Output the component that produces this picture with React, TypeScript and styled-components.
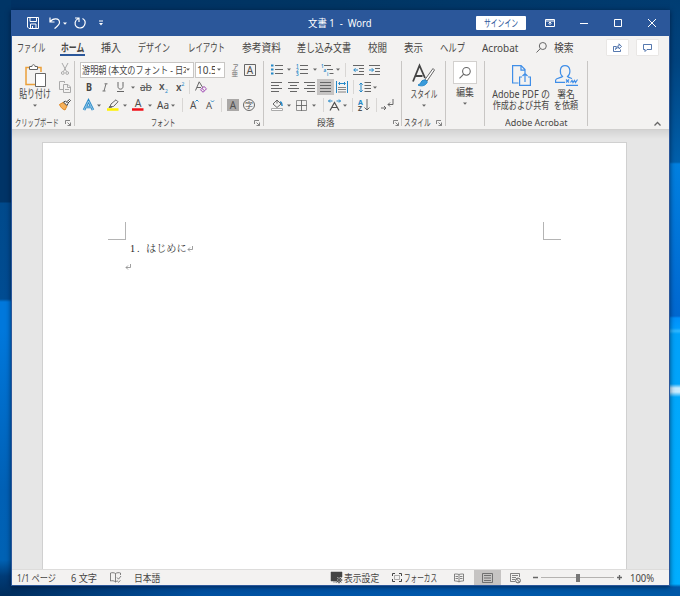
import React from 'react';
import styled, { createGlobalStyle } from 'styled-components';

const BLUE = '#2b579a';
const INK = '#666';
const SKY = '#2488c8';
const UI = '"Noto Sans", "Noto Sans CJK JP", sans-serif';

const Global = createGlobalStyle`
  * { box-sizing: border-box; }
  body { margin: 0; overflow: hidden; font-family: ${UI}; color: #484644; }
  svg { display: block; flex: none; overflow: visible; }
`;

const Desktop = styled.main`
  width: 680px;
  height: 596px;
  padding: 10px 10px 10px 11px;
  background:
    linear-gradient(#003566 0, #003467 163px, #003467 202px, #004a8c 203px, #004c92 299px, #0078dc 302px, #0078dc 330px, #0060b5 490px, #0062b4 560px, #003c78 576px, #002d5c 596px) left / 11px 100% no-repeat,
    linear-gradient(#003d73 0, #00437e 60px, #0060ac 162px, #0080e0 164px, #0068d0 316px, #0090fa 318px, #009cff 328px, #30b8ff 331px, #00a2fa 334px, #00a4fa 384px, #c8ecff 388px, #c8ecff 392px, #00a8fc 397px, #00aeff 584px, #0058a8 587px, #0058a8 596px) right / 10px 100% no-repeat,
    linear-gradient(90deg, #002d5c, #0050a0 30%, #0058ac 65%, #0058a4) bottom / 100% 12px no-repeat,
    linear-gradient(90deg, #003163, #003563 50%, #003b70);
`;
const Window = styled.section`
  display: flex;
  flex-direction: column;
  width: 659px;
  height: 576px;
  border: 1px solid ${BLUE};
  border-top: 0;
  background: #f3f2f1;
  box-shadow: 0 1px 5px rgba(0, 10, 40, 0.65);
`;
const TitleBar = styled.header`
  display: flex;
  align-items: center;
  height: 26px;
  flex: none;
  padding-left: 15px;
  background: ${BLUE};
  color: #fff;
`;
const Slot = styled.span<{ $w: number; $center?: boolean }>`
  display: flex;
  align-items: center;
  justify-content: ${p => (p.$center ? 'center' : 'flex-start')};
  flex: none;
  width: ${p => p.$w}px;
  height: 100%;
`;
const Text = styled.span<{ $k?: number; $size?: number; $bold?: boolean; $center?: boolean; $mt?: number }>`
  display: block;
  flex: none;
  margin-top: ${p => p.$mt ?? 0}px;
  font-size: ${p => p.$size ?? 11}px;
  line-height: 14px;
  font-weight: ${p => (p.$bold ? 700 : 400)};
  white-space: pre;
  transform: scaleX(${p => p.$k ?? 1});
  transform-origin: ${p => (p.$center ? 'center' : 'left')};
`;
const SignIn = styled.button`
  display: flex;
  align-items: center;
  justify-content: center;
  width: 50px;
  height: 14px;
  padding: 0;
  border: 0;
  border-radius: 1px;
  background: #fff;
  color: ${BLUE};
  font-family: inherit;
`;
const Tabs = styled.nav`
  display: flex;
  height: 22px;
  flex: none;
  padding-left: 5px;
`;
const TabItem = styled.span<{ $w: number }>`
  display: flex;
  align-items: center;
  flex: none;
  width: ${p => p.$w}px;
  height: 23px;
`;
const ActiveMark = styled.span`
  display: flex;
  align-items: center;
  width: 25px;
  height: 20px;
  margin: 0 0 3px -1px;
  padding: 5px 0 0 1px;
  border-bottom: 2px solid ${BLUE};
`;
const TabButton = styled.button<{ $w: number }>`
  display: flex;
  align-items: center;
  justify-content: center;
  flex: none;
  width: ${p => p.$w}px;
  height: 17px;
  margin: 3px 7px 0 0;
  padding: 0;
  border: 1px solid #e9e7e5;
  border-radius: 1px;
  background: #fff;
`;
const Ribbon = styled.section`
  display: flex;
  height: 72px;
  flex: none;
  border-bottom: 1px solid #d0cfce;
`;
const Group = styled.div<{ $w: number }>`
  display: flex;
  flex-direction: column;
  flex: none;
  width: ${p => p.$w}px;
  height: 65px;
  margin-top: 3px;
  border-right: 1px solid #c8c6c4;
`;
const GroupBody = styled.div<{ $row?: boolean }>`
  display: flex;
  flex-direction: ${p => (p.$row ? 'row' : 'column')};
  height: 55px;
  flex: none;
`;
const Tools = styled.div<{ $pad: number; $h: number }>`
  display: flex;
  align-items: center;
  flex: none;
  height: ${p => p.$h}px;
  padding-left: ${p => p.$pad}px;
`;
const GroupFoot = styled.div<{ $pad: number }>`
  display: flex;
  align-items: center;
  height: 14px;
  padding-left: ${p => p.$pad}px;
`;
const BigTool = styled.div<{ $w: number; $ml?: number; $pt?: number }>`
  display: flex;
  flex-direction: column;
  align-items: center;
  flex: none;
  width: ${p => p.$w}px;
  margin-left: ${p => p.$ml ?? 0}px;
  padding-top: ${p => p.$pt ?? 3}px;
`;
const SmallStack = styled.div`
  display: flex;
  flex-direction: column;
  align-items: center;
  gap: 6px;
  width: 14px;
  padding-top: 2px;
  margin-left: 4px;
`;
const Rule = styled.i`
  width: 1px;
  height: 14px;
  background: #d8d6d4;
`;
const Field = styled.span<{ $w: number }>`
  display: flex;
  align-items: center;
  justify-content: space-between;
  flex: none;
  width: ${p => p.$w}px;
  height: 16px;
  margin-right: 1px;
  padding: 0 3px 0 1px;
  border: 1px solid #c8c6c4;
  background: #fff;
`;
const Clip = styled.span<{ $w: number }>`
  display: flex;
  width: ${p => p.$w}px;
  overflow: hidden;
`;
const Highlight = styled.span<{ $w: number; $h: number }>`
  display: flex;
  align-items: center;
  justify-content: center;
  flex: none;
  width: ${p => p.$w}px;
  height: ${p => p.$h}px;
  background: #c6c4c3;
`;
const SearchTile = styled.span`
  display: flex;
  align-items: center;
  justify-content: center;
  width: 24px;
  height: 23px;
  margin-bottom: 1px;
  border: 1px solid #d2d0ce;
  background: #fff;
`;
const CaretBox = styled.span`
  display: flex;
  height: 8px;
  align-items: center;
`;
const Collapse = styled.span`
  display: flex;
  align-items: flex-end;
  margin-left: 66px;
  padding-bottom: 3px;
`;
const Canvas = styled.section`
  display: flex;
  justify-content: flex-start;
  flex: 1;
  min-height: 0;
  padding: 12px 0 0 30px;
  background: linear-gradient(#d4d4d4 0, #e6e6e6 9px);
`;
const Paper = styled.article`
  width: 585px;
  padding-top: 79px;
  border: 1px solid #d0d0d0;
  border-bottom: 0;
  background: #fff;
`;
const Corners = styled.div`
  display: flex;
  justify-content: space-between;
  padding: 0 65px 0 65px;
`;
const Corner = styled.i<{ $right?: boolean }>`
  width: 18px;
  height: 18px;
  border-bottom: 1px solid #b4b4b4;
  ${p => (p.$right ? 'border-left' : 'border-right')}: 1px solid #b4b4b4;
`;
const Line = styled.p<{ $ml: number }>`
  display: flex;
  align-items: center;
  height: 18px;
  margin: 0 0 0 ${p => p.$ml}px;
  font: 10.2px/18px "Liberation Serif", "Noto Serif CJK JP", "Noto Sans CJK JP", serif;
  font-weight: 300;
  color: #222;
`;
const Numeral = styled.b`
  width: 20px;
  padding-left: 4px;
  font-weight: 400;
  letter-spacing: 2px;
`;
const Status = styled.footer`
  display: flex;
  align-items: center;
  flex: none;
  height: 16px;
  padding-left: 5px;
  border-top: 1px solid #dddcdb;
`;
const Track = styled.span`
  display: flex;
  align-items: center;
  justify-content: center;
  width: 73px;
  height: 1px;
  background: #b5b3b1;
`;
const Thumb = styled.i`
  width: 4px;
  height: 8px;
  background: #777;
`;

const Svg = ({ w, h, c = INK, sw = 1, children }: { w: number; h: number; c?: string; sw?: number; children: React.ReactNode }) => (
  <svg width={w} height={h} viewBox={`0 0 ${w} ${h}`} fill="none" stroke={c} strokeWidth={sw}>{children}</svg>
);
const Caret = ({ c = INK }: { c?: string }) => (
  <Svg w={4} h={3}><path d="M0 .5h4L2 2.7z" fill={c} stroke="none" /></Svg>
);
const Launcher = () => (
  <Svg w={6} h={6} c="#777"><path d="M.5 4V.5H5M2.5 2.5l3 3M5.5 2.5v3h-3" strokeWidth=".9" /></Svg>
);
const Magnifier = ({ s = 11 }: { s?: number }) => (
  <svg width={s} height={s} viewBox="0 0 11 11" fill="none" stroke={INK}><circle cx="6.8" cy="4" r="3.5" /><path d="M4.3 6.6.5 10.5" /></svg>
);
const Lines = ({ widths, align = 'left', c = INK }: { widths: number[]; align?: string; c?: string }) => (
  <Svg w={11} h={11} c={c}>
    {widths.map((n, i) => {
      const x = align === 'left' ? 0 : align === 'right' ? 11 - n : (11 - n) / 2;
      return <path key={i} d={`M${x} ${i * 3 + 0.5}h${n}`} />;
    })}
  </Svg>
);
const Glyph = ({ x = 0, y, s = 11, c = '#505050', w = 400, children }: { x?: number; y: number; s?: number; c?: string; w?: number; children: string }) => (
  <text x={x} y={y} fontSize={s} fill={c} stroke="none" fontWeight={w} fontFamily={UI}>{children}</text>
);

const tabs: { label: string; step: number; width: number }[] = [
  { label: '挿入', step: 37, width: 20 },
  { label: 'デザイン', step: 50, width: 32 },
  { label: 'レイアウト', step: 54, width: 37 },
  { label: '参考資料', step: 55, width: 39 },
  { label: '差し込み文書', step: 71, width: 54 },
  { label: '校閲', step: 36, width: 19 },
  { label: '表示', step: 36, width: 19 },
  { label: 'ヘルプ', step: 42, width: 25 },
];

const Title = () => (
  <TitleBar>
    <Slot $w={22}><Svg w={12} h={12} c="#fff"><path d="M.5.5h11v11H2L.5 10zM3 .5v4h6.500v-4M3.500 11.500V7h5.500v4.500M5.500 9v2" /></Svg></Slot>
    <Slot $w={14}><Svg w={12} h={12} c="#fff" sw={1.2}><path d="M1 .5V5h4.500M1 5C4 .5 10.500 1 10.500 5.500 10.500 8 8 9.500 5.500 11.500" /></Svg></Slot>
    <Slot $w={11}><Caret c="#fff" /></Slot>
    <Slot $w={25}><Svg w={12} h={12} c="#fff" sw={1.2}><path d="M1 1h4v4M4.500 1.500C.5 3 .2 7.500 2.500 9.700c2.500 2.200 6.500 1.500 8-1.500 1.300-2.800.2-5.500-2-6.700" /></Svg></Slot>
    <Slot $w={209}><Svg w={4} h={6} c="#fff"><path d="M0 1h4" /><path d="M0 3h4L2 5.500z" fill="#fff" stroke="none" /></Svg></Slot>
    <Slot $w={168}><Text $k={0.9} $size={10.5}>文書 1  -  Word</Text></Slot>
    <Slot $w={69}><SignIn><Text $size={10} $k={0.68} $center>サインイン</Text></SignIn></Slot>
    <Slot $w={35}><Svg w={10} h={8} c="#fff"><path d="M.5.5h9v7h-9zM.5 2h9M5 6V3M3.500 4.500 5 3l1.500 1.500" /></Svg></Slot>
    <Slot $w={34}><Svg w={8} h={8} c="#fff"><path d="M0 4.500h8" /></Svg></Slot>
    <Slot $w={34}><Svg w={8} h={8} c="#fff"><path d="M.5.5h7v7h-7z" /></Svg></Slot>
    <Slot $w={10}><Svg w={8} h={8} c="#fff"><path d="m0 0 8 8M8 0 0 8" /></Svg></Slot>
  </TitleBar>
);

const TabBar = () => (
  <Tabs>
    <TabItem $w={44}><Text $k={0.645}>ファイル</Text></TabItem>
    <TabItem $w={40}><ActiveMark><Text $k={0.71} $bold>ホーム</Text></ActiveMark></TabItem>
    {tabs.map(t => (
      <TabItem key={t.label} $w={t.step}><Text $k={t.width / (t.label.length * 11)}>{t.label}</Text></TabItem>
    ))}
    <TabItem $w={54}><Text $size={10.5} $k={0.95}>Acrobat</Text></TabItem>
    <TabItem $w={18}><Magnifier /></TabItem>
    <TabItem $w={52}><Text $k={0.89}>検索</Text></TabItem>
    <TabButton $w={23}><Svg w={9} h={9} c={BLUE}><path d="M3.500 3.500h-3v5h7v-2M2.500 6.500C3 4 4 3 6 3V.8l2.500 2.700L6 5.800V4.500C4.500 4.500 3.500 5 2.500 6.500z" strokeWidth=".8" /></Svg></TabButton>
    <TabButton $w={23}><Svg w={9} h={8} c={BLUE}><path d="M.5.5h8v5H4l-2 2v-2H.5z" strokeWidth=".8" /></Svg></TabButton>
  </Tabs>
);

const ClipboardGroup = () => (
  <Group $w={63}>
    <GroupBody $row>
      <BigTool $w={38} $ml={4}>
        <Svg w={21} h={23}>
          <path d="M4 3.500H1v17h9M13 3.500h3V8" stroke="#eba03a" strokeWidth="1.500" />
          <path d="M4.500 2.500H7C7 0 10 0 10 2.500h2.500v3h-8z" fill="#fff" />
          <path d="M10.500 9.500h10v13h-10z" fill="#fff" />
        </Svg>
        <Text $k={0.72} $center>貼り付け</Text>
        <CaretBox><Caret /></CaretBox>
      </BigTool>
      <SmallStack>
        <Svg w={8} h={12} c="#aaa"><path d="M1 0l4.500 8.500M7 0 2.500 8.500" /><circle cx="1.800" cy="10" r="1.400" /><circle cx="6.200" cy="10" r="1.400" /></Svg>
        <Svg w={12} h={12} c="#aaa"><path d="M4 8.500H.5v-8h5V2M4.500 3.500H9l2.500 2.500v5.500h-7zM8.500 3.500v3h3M6 8.500h4" /></Svg>
        <Svg w={12} h={11}><path d="M.5 5.500 4 3.500 8 7l-2 4C3 10 1.500 8 .5 5.500z" fill="#f5b25d" stroke="#e08620" /><path d="m4.500 3 2-1L9 4.500l-1 2zM7.500 3 10.500.5l1 1L9 4" fill="#fff" stroke="#444" /></Svg>
      </SmallStack>
    </GroupBody>
    <GroupFoot $pad={3}><Slot $w={50}><Text $size={9.5} $k={0.66}>クリップボード</Text></Slot><Launcher /></GroupFoot>
  </Group>
);

const FontGroup = () => (
  <Group $w={189}>
    <GroupBody>
      <Tools $pad={5} $h={17}>
        <Field $w={114}><Clip $w={106}><Text $size={10} $k={0.815}>游明朝 (本文のフォント - 日本語)</Text></Clip><Caret /></Field>
        <Field $w={30}><Clip $w={18}><Text $size={10}>10.5</Text></Clip><Caret /></Field>
        <Slot $w={18} $center><Svg w={8} h={14}><Glyph y={5.5} x={1.5} s={6}>ア</Glyph><Glyph y={13} x={.5} s={6.5} c="#777">亜</Glyph></Svg></Slot>
        <Slot $w={12}><Svg w={12} h={12}><path d="M.5.5h11v11H.5z" /><Glyph x={2.8} y={9.7} s={10}>A</Glyph></Svg></Slot>
      </Tools>
      <Tools $pad={11} $h={18}>
        <Slot $w={16}><Text $size={10} $bold $k={0.9}>B</Text></Slot>
        <Slot $w={15}><Svg w={6} h={9}><path d="M2.500.8h3M.5 8h3M4 .8 2 8" strokeWidth=".9" /></Svg></Slot>
        <Slot $w={14}><Svg w={7} h={10}><path d="M1 0v4.500C1 8 6 8 6 4.500V0M0 9.500h7" /></Svg></Slot>
        <Slot $w={9}><Caret /></Slot>
        <Slot $w={19}><Svg w={12} h={10}><Glyph y={8.5} s={10}>ab</Glyph><path d="M0 5.500h12" /></Svg></Slot>
        <Slot $w={17}><Svg w={9} h={11}><Glyph y={8} s={10} w={600}>x</Glyph><Glyph x={6} y={11} s={5} c={SKY}>2</Glyph></Svg></Slot>
        <Slot $w={13}><Svg w={9} h={11}><Glyph y={9} s={10} w={600}>x</Glyph><Glyph x={5.5} y={4} s={5} c={SKY}>2</Glyph></Svg></Slot>
        <Slot $w={6}><Rule /></Slot>
        <Slot $w={12}><Svg w={12} h={12}><path d="M.5 9.500 4.200.8 8 7M2 6.500h4" /><path d="m5.500 8.700 3.500-3.200 2.500 2.300L8 11.300z" fill="#f3f2f1" stroke="#a04bb5" /><path d="m7 7.500 2.500 2.300" stroke="#a04bb5" /></Svg></Slot>
      </Tools>
      <Tools $pad={8} $h={18}>
        <Slot $w={14}><Svg w={11} h={11}><path d="M1 10 5.500 1 10 10M3 7h5" stroke="#2488c8" strokeWidth="2.700" /><path d="M1 10 5.500 1 10 10M3 7h5" stroke="#c7e4f6" strokeWidth=".7" /></Svg></Slot>
        <Slot $w={10}><Caret /></Slot>
        <Slot $w={16}><Svg w={12} h={12}><path d="m3 8 1-3L9 .8l2 2L6.500 7.500z" /><path d="m2 8.500 1.500-2 1.500 1.500z" fill={INK} /><path d="M0 10.500h11.500" stroke="#fff200" strokeWidth="2.500" /></Svg></Slot>
        <Slot $w={9}><Caret /></Slot>
        <Slot $w={16}><Svg w={12} h={12}><Glyph x={2.7} y={8} s={10.5}>A</Glyph><path d="M0 10.500h11.500" stroke="#f01018" strokeWidth="2.500" /></Svg></Slot>
        <Slot $w={9}><Caret /></Slot>
        <Slot $w={14}><Text $size={10}>Aa</Text></Slot>
        <Slot $w={11}><Caret /></Slot>
        <Slot $w={8}><Rule /></Slot>
        <Slot $w={16}><Svg w={9} h={12}><Glyph y={10} s={10}>A</Glyph><path d="m5.500 2.500 1.500-1.500 1.500 1.500" stroke={SKY} /></Svg></Slot>
        <Slot $w={15}><Svg w={9} h={12}><Glyph y={10} s={9.500}>A</Glyph><path d="m5 1.500 1.500 1.500L8 1.500" stroke={SKY} /></Svg></Slot>
        <Slot $w={6}><Rule /></Slot>
        <Slot $w={16}><Svg w={12} h={12} c="none"><path d="M0 0h12v12H0z" fill="#aaa8a7" /><Glyph x={2.7} y={9.7} s={10}>A</Glyph></Svg></Slot>
        <Slot $w={12}><Svg w={12} h={12}><circle cx="6" cy="6" r="5.500" /><Glyph x={2} y={9} s={8}>字</Glyph></Svg></Slot>
      </Tools>
    </GroupBody>
    <GroupFoot $pad={76}><Slot $w={103}><Text $size={9.5} $k={0.64}>フォント</Text></Slot><Launcher /></GroupFoot>
  </Group>
);

const ParagraphGroup = () => (
  <Group $w={138}>
    <GroupBody>
      <Tools $pad={7} $h={17}>
        <Slot $w={16}><Svg w={12} h={11}><path d="M0 1.500h2.500M0 5.500h2.500M0 9.500h2.500" stroke={SKY} strokeWidth="2.200" /><path d="M4 1.500h8M4 5.500h8M4 9.500h8" /></Svg></Slot>
        <Slot $w={9}><Caret /></Slot>
        <Slot $w={17}><Svg w={12} h={11}><Glyph y={3.5} s={4.6} c={SKY} w={600}>1</Glyph><Glyph y={7.5} s={4.6} c={SKY} w={600}>2</Glyph><Glyph y={11.5} s={4.6} c={SKY} w={600}>3</Glyph><path d="M4 1.500h8M4 5.500h8M4 9.500h8" /></Svg></Slot>
        <Slot $w={8}><Caret /></Slot>
        <Slot $w={15}><Svg w={13} h={11}><Glyph y={3.5} s={4.6} c={SKY} w={600}>1</Glyph><Glyph x={2.5} y={7.5} s={4.6} c={SKY} w={600}>a</Glyph><Glyph x={6} y={11.5} s={4.6} c={SKY} w={600}>i</Glyph><path d="M3 1.500h7M6 5.500h6M8.500 9.500h4" /></Svg></Slot>
        <Slot $w={9}><Caret /></Slot>
        <Slot $w={8}><Rule /></Slot>
        <Slot $w={16}><Svg w={11} h={10}><path d="M0 .5h11M6 3.500h5M6 6.500h5M0 9.500h11" /><path d="M5 5H.8M2.500 3.200.8 5l1.700 1.800" stroke={SKY} /></Svg></Slot>
        <Slot $w={12}><Svg w={11} h={10}><path d="M0 .5h11M6 3.500h5M6 6.500h5M0 9.500h11" /><path d="M0 5h4.500M2.800 3.200 4.500 5 2.800 6.800" stroke={SKY} /></Svg></Slot>
      </Tools>
      <Tools $pad={7} $h={18}>
        <Slot $w={17}><Lines widths={[11, 8, 11, 8]} /></Slot>
        <Slot $w={16}><Lines widths={[11, 7, 11, 7]} align="center" /></Slot>
        <Slot $w={13}><Lines widths={[11, 8, 11, 8]} align="right" /></Slot>
        <Slot $w={19}><Highlight $w={17} $h={16}><Lines widths={[11, 11, 11, 11]} /></Highlight></Slot>
        <Slot $w={17}><Svg w={12} h={12}><path d="M.5 0v12M11.500 0v12M3 2.500h6M4 1 2.500 2.500 4 4M8 1l1.500 1.500L8 4" stroke={SKY} /><path d="M2 6.500h8M2 8.500h8M2 11h8" strokeWidth=".8" /></Svg></Slot>
        <Slot $w={6}><Rule /></Slot>
        <Slot $w={14}><Svg w={12} h={11}><path d="M2 1v9M.3 2.700 2 1l1.700 1.700M.3 8.300 2 10l1.700-1.700" stroke={SKY} /><path d="M5.500.5H12M5.500 3.500H12M5.500 6.500H12M5.500 9.500H12" /></Svg></Slot>
        <Slot $w={4}><Caret /></Slot>
      </Tools>
      <Tools $pad={7} $h={18}>
        <Slot $w={16}><Svg w={12} h={12}><path d="m2 5 4-4 4 4-4 3.500zM6 1v3.500" /><path d="M9 3c2 0 2 1.500 2 4" stroke={SKY} strokeWidth="1.500" /><path d="M.5 9.500h11v2H.5z" fill="#fff" stroke="#aaa" /></Svg></Slot>
        <Slot $w={9}><Caret /></Slot>
        <Slot $w={16}><Svg w={11} h={11}><path d="M.5.5h10v10H.5z" stroke="#888" strokeWidth=".9" /><path d="M5.500 0v11M0 5.500h11" strokeWidth=".9" /></Svg></Slot>
        <Slot $w={11}><Caret /></Slot>
        <Slot $w={5}><Rule /></Slot>
        <Slot $w={15}><Svg w={13} h={12}><path d="M2 11.500 6.500 3.500 11 11.500M4 8.500h5" strokeWidth="1.200" stroke="#505050" /><path d="M.5 2h4M2 .5.500 2 2 3.500M12.500 2h-4M11 .5 12.500 2 11 3.500" stroke={SKY} /></Svg></Slot>
        <Slot $w={9}><Caret /></Slot>
        <Slot $w={6}><Rule /></Slot>
        <Slot $w={18}><Svg w={12} h={12}><Glyph y={5.5} s={7} c={SKY} w={700}>A</Glyph><Glyph y={12} s={7} w={700}>Z</Glyph><path d="M9 0v11M6.500 8.500 9 11l2.500-2.500" /></Svg></Slot>
        <Slot $w={5}><Rule /></Slot>
        <Slot $w={13}><Svg w={13} h={12}><path d="M12 0v5.500H7M9 3.500l-2 2 2 2M0 9h5M3 7l2 2-2 2" /></Svg></Slot>
      </Tools>
    </GroupBody>
    <GroupFoot $pad={53}><Slot $w={76}><Text $size={9.5} $k={0.93}>段落</Text></Slot><Launcher /></GroupFoot>
  </Group>
);

const RightGroups = () => (
  <>
    <Group $w={44}>
      <GroupBody>
        <BigTool $w={43}>
          <Svg w={23} h={23}>
            <path d="M1 17.500 7.500 1.500 13 14M3.500 12h7" strokeWidth="1.800" stroke="#444" />
            <path d="m13 15.500 8-11 1.500 1.500L15 17z" fill="#fff" />
            <path d="M6 21c3 0 2.500-5 6-5 3 0 4 2 2.500 3.500C12.500 22 9 22.500 6 21z" fill="#3a9bdb" stroke="#2488c8" />
          </Svg>
          <Text $size={10} $k={0.67} $center>スタイル</Text>
          <CaretBox><Caret /></CaretBox>
        </BigTool>
      </GroupBody>
      <GroupFoot $pad={2}><Slot $w={32}><Text $size={9.5} $k={0.7}>スタイル</Text></Slot><Launcher /></GroupFoot>
    </Group>
    <Group $w={39}>
      <BigTool $w={38} $pt={0}>
        <SearchTile><Magnifier s={12} /></SearchTile>
        <Text $size={10} $k={0.88} $center>編集</Text>
        <CaretBox><Caret /></CaretBox>
      </BigTool>
    </Group>
    <Group $w={103}>
      <GroupBody $row>
        <BigTool $w={58} $ml={7} $pt={4}>
          <Svg w={19} h={21} c="#3f8ee8" sw={1.2}><path d="M6.500 18H.6V.6h8.500L13 4.500V9M9 .6v4.500h4M10 12H7.600v8.400h10.800V12H16M13 17V8.500M10.500 11 13 8.500l2.500 2.500" /></Svg>
          <Text $size={10} $k={0.9} $center $mt={1}>Adobe PDF の</Text>
          <Text $size={10} $k={0.81} $center $mt={-3}>作成および共有</Text>
        </BigTool>
        <BigTool $w={24} $ml={4} $pt={4}>
          <Svg w={23} h={21} c="#3f8ee8" sw={1.2}><path d="M10 17.400H.6V15C1 13 6 13 7.500 11.500 4.500 9 4 .6 10 .6s6 8 2.500 10.900c1 1 3 1.500 4.500 2M11 14.500l3 3M14 14.500l-3 3M15.500 17.500l1.500-2 1 2 1.500-2 1 2 2-3M11 20.400h12" /></Svg>
          <Text $size={10} $k={0.88} $center $mt={1}>署名</Text>
          <Text $size={10} $k={0.81} $center $mt={-3}>を依頼</Text>
        </BigTool>
      </GroupBody>
      <GroupFoot $pad={20}><Text $size={9.5} $k={0.945}>Adobe Acrobat</Text></GroupFoot>
    </Group>
    <Collapse><Svg w={7} h={4} c="#666" sw={1.3}><path d="m.5 3.500 3-3 3 3" /></Svg></Collapse>
  </>
);

const ReturnMark = () => (
  <Svg w={6} h={7} c="#888"><path d="M5.500 0v3.500H1M3 1.500l-2 2 2 2" strokeWidth=".8" /></Svg>
);

const StatusBar = () => (
  <Status>
    <Slot $w={54}><Text $size={10} $k={0.82}>1/1 ページ</Text></Slot>
    <Slot $w={39}><Text $size={10} $k={0.92}>6 文字</Text></Slot>
    <Slot $w={24}><Svg w={11} h={11}><path d="M5.500 10V1.500C4 .5 2 .5.5 1v8C2 8.500 4 8.500 5.500 10zM5.500 1.500C7 .5 9 .5 10.500 1v2M5.500 10c1-.8 1.500-1 2.500-1M7 5.500l1.500 1.700L11 4M8 10.500l2.500-2" strokeWidth=".8" /></Svg></Slot>
    <Slot $w={197}><Text $size={10} $k={0.88}>日本語</Text></Slot>
    <Slot $w={13}><Svg w={11} h={11}><path d="M0 0h11v5H6v4H0zM2 10h4" fill="#444" stroke="#444" strokeWidth=".5" /><circle cx="8" cy="8" r="2.200" fill="#f3f2f1" stroke="#444" /><path d="M8 4.500v7M4.500 8h7M5.500 5.500l5 5M10.500 5.500l-5 5" strokeWidth=".7" stroke="#444" /></Svg></Slot>
    <Slot $w={48}><Text $size={10} $k={0.88}>表示設定</Text></Slot>
    <Slot $w={12}><Svg w={10} h={9}><path d="M.5 3V.5H3M7 .5h2.500V3M9.500 6v2.500H7M3 8.500H.5V6" stroke="#444" /><path d="M2.500 2.500h5v4h-5z" strokeWidth=".5" /></Svg></Slot>
    <Slot $w={50}><Text $size={10} $k={0.66}>フォーカス</Text></Slot>
    <Slot $w={20}><Svg w={10} h={10}><path d="M5 9V1.500C4 1 2 1 .5 1v7C2 8 4 8 5 9zM5 1.500C6 1 8 1 9.500 1v7C8 8 6 8 5 9M1.500 3.500H4M1.500 5.500H4M6 3.500h2.500M6 5.500h2.500" strokeWidth=".8" /></Svg></Slot>
    <Slot $w={36}><Highlight $w={27} $h={15}><Svg w={11} h={10}><path d="M.5.5h10v9H.5zM2 2.500h7M2 5h7M2 7.500h7" strokeWidth=".9" /></Svg></Highlight></Slot>
    <Slot $w={23}><Svg w={11} h={10}><path d="M5 8.500H.5v-8h9V4M2 2.500h6M2 4.500h4M2 6.500h3" strokeWidth=".8" /><circle cx="8" cy="7.500" r="2.400" /><path d="m6.500 6 3 3" /></Svg></Slot>
    <Slot $w={8}><Svg w={5} h={5} sw={1.5}><path d="M0 2.500h5" /></Svg></Slot>
    <Track><Thumb /></Track>
    <Slot $w={3} />
    <Slot $w={13}><Svg w={5} h={5} sw={1.300}><path d="M0 2.500h5M2.500 0v5" /></Svg></Slot>
    <Text $size={10} $k={0.95}>100%</Text>
  </Status>
);

export default function App() {
  return (
    <Desktop>
      <Global />
      <Window>
        <Title />
        <TabBar />
        <Ribbon>
          <ClipboardGroup />
          <FontGroup />
          <ParagraphGroup />
          <RightGroups />
        </Ribbon>
        <Canvas>
          <Paper>
            <Corners><Corner /><Corner $right /></Corners>
            <Line $ml={83}><Numeral>1.</Numeral><span>はじめに</span><ReturnMark /></Line>
            <Line $ml={82}><ReturnMark /></Line>
          </Paper>
        </Canvas>
        <StatusBar />
      </Window>
    </Desktop>
  );
}
